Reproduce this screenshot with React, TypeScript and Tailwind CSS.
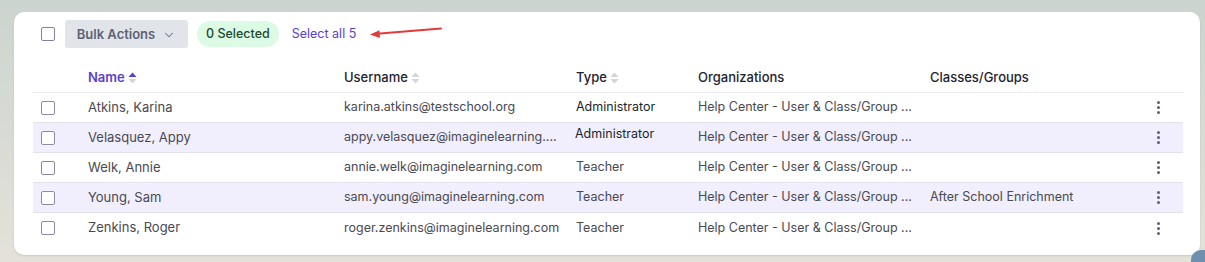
import { ChevronDown } from "lucide-react"

type User = {
  name: string
  username: string
  type: string
  org: string
  classes: string
}

const users: User[] = [
  { name: "Atkins, Karina", username: "karina.atkins@testschool.org", type: "Administrator", org: "Help Center - User & Class/Group ...", classes: "" },
  { name: "Velasquez, Appy", username: "appy.velasquez@imaginelearning....", type: "Administrator", org: "Help Center - User & Class/Group ...", classes: "" },
  { name: "Welk, Annie", username: "annie.welk@imaginelearning.com", type: "Teacher", org: "Help Center - User & Class/Group ...", classes: "" },
  { name: "Young, Sam", username: "sam.young@imaginelearning.com", type: "Teacher", org: "Help Center - User & Class/Group ...", classes: "After School Enrichment" },
  { name: "Zenkins, Roger", username: "roger.zenkins@imaginelearning.com", type: "Teacher", org: "Help Center - User & Class/Group ...", classes: "" },
]

const cols = "grid grid-cols-[55px_256px_232px_122px_232px_1fr_40px]"

function Checkbox() {
  return <div className="h-[14px] w-[14px] rounded-[2px] border border-[#8e8aa6] bg-white" />
}

function SortIcon({ active }: { active?: boolean }) {
  return (
    <svg width="9" height="12" viewBox="0 0 9 12" className="ml-[3px]">
      <path d="M4.5 0.5 L8.5 5 H0.5 Z" fill={active ? "#5b3fc9" : "#d4d4dc"} />
      <path d="M4.5 11.5 L8.5 7 H0.5 Z" fill="#d4d4dc" />
    </svg>
  )
}

function Kebab() {
  return (
    <div className="flex flex-col items-center gap-[2px]">
      <span className="h-[3px] w-[3px] rounded-full bg-[#5f5d7a]" />
      <span className="h-[3px] w-[3px] rounded-full bg-[#5f5d7a]" />
      <span className="h-[3px] w-[3px] rounded-full bg-[#5f5d7a]" />
    </div>
  )
}

export default function App() {
  return (
    <div
      className="relative h-[262px] w-[1205px] overflow-hidden bg-gradient-to-b from-[#ccd4cf] to-[#e4e2d8] pl-[14px] pr-[5px] pt-[12px]"
      style={{ fontFamily: "Inter, 'Liberation Sans', sans-serif" }}
    >
      <div className="h-[243px] rounded-[10px] bg-white pl-[19px] pr-[17px] pt-[8px] shadow-[0_1px_2px_rgba(0,0,0,0.12)]">
        {/* toolbar */}
        <div className="flex h-[28px] items-center">
          <div className="ml-[8px]">
            <div className="h-[14px] w-[14px] rounded-[2px] border border-[#8580a8] bg-white" />
          </div>
          <button
            type="button"
            className="ml-[10px] flex h-[28px] w-[123px] items-center justify-center gap-[7px] rounded-[3px] bg-[#e1e5e9] pt-[1px] text-[13px] font-semibold text-[#5d6076]"
          >
            Bulk Actions
            <ChevronDown size={14} strokeWidth={1.75} className="text-[#6b6e82]" />
          </button>
          <span className="ml-[9px] flex h-[26px] items-center rounded-full bg-[#dcfbe4] px-[9px] text-[12.5px] font-medium text-[#1d4a30]">
            0 Selected
          </span>
          <span className="ml-[13px] text-[12.5px] text-[#5a3fcf]">Select all 5</span>
          <svg width="76" height="12" viewBox="0 0 76 12" className="ml-[13px] mt-[-3px]">
            <path d="M72 1.5 L8 6.8" stroke="#e23b3b" strokeWidth="2" strokeLinecap="round" />
            <path d="M1 7.4 L10.5 3.2 L10.9 11 Z" fill="#e23b3b" />
          </svg>
        </div>

        {/* header */}
        <div className={`${cols} mt-[12px] h-[33px] items-center border-b border-[#ebebf0] pt-[4px] text-[13px] font-medium text-[#1f2230]`}>
          <div />
          <div className="flex items-center font-semibold text-[#5a3fcf]">
            Name
            <SortIcon active />
          </div>
          <div className="flex items-center">
            Username
            <SortIcon />
          </div>
          <div className="flex items-center">
            Type
            <SortIcon />
          </div>
          <div>Organizations</div>
          <div>Classes/Groups</div>
          <div />
        </div>

        {/* rows */}
        {users.map((u, i) => (
          <div
            key={u.username}
            className={`${cols} h-[30px] items-center text-[12.5px] text-[#494952] ${
              i < users.length - 1 ? "border-b border-[#e3e2ec]" : ""
            } ${i % 2 === 1 ? "bg-[#f1effd]" : "bg-white"}`}
          >
            <div className="pl-[8px]">
              <Checkbox />
            </div>
            <div className="truncate text-[13px]">{u.name}</div>
            <div className="truncate">{u.username}</div>
            <div className={u.type === "Administrator" ? "text-[#1e1e28]" : ""}>
              {u.type === "Administrator" && i === 1 ? (
                <span className="relative top-[-3px] -ml-[1px]">{u.type}</span>
              ) : (
                <span>{u.type}</span>
              )}
            </div>
            <div className="truncate">{u.org}</div>
            <div className="truncate">{u.classes}</div>
            <div className="flex justify-start pl-[14px]">
              <Kebab />
            </div>
          </div>
        ))}
      </div>
      <div className="absolute bottom-0 right-0 h-[12px] w-[14px] rounded-tl-[10px] bg-[#6f8fae]" />
    </div>
  )
}
